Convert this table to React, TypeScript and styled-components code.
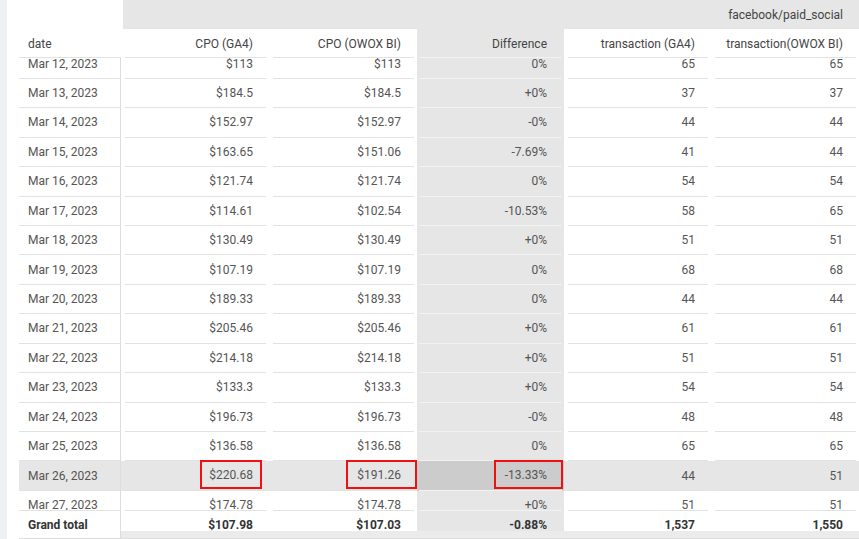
import React from "react";
import styled, { createGlobalStyle } from "styled-components";

const GlobalStyle = createGlobalStyle`
  html, body {
    margin: 0;
    padding: 0;
    background: #ffffff;
  }
  body {
    font-family: Roboto, "Liberation Sans", Arial, sans-serif;
    font-size: 12px;
    color: #555555;
  }
`;

const COLUMNS = "102px 148px 148px 147px 147px 148px";

export const Page = styled.div`
  display: flex;
  width: 859px;
  height: 539px;
  overflow: hidden;
`;

export const SideStrip = styled.div`
  width: 7px;
  flex-shrink: 0;
  background: #eef1f4;
`;

export const Report = styled.div`
  flex: 1;
  display: flex;
  flex-direction: column;
  padding-left: 12px;
`;

export const GroupBand = styled.div`
  height: 29px;
  margin-left: 104px;
  background: #e6e6e6;
  display: flex;
  align-items: center;
  justify-content: flex-end;
  padding-right: 16px;
  color: #444444;
  font-size: 12px;
`;

export const Row = styled.div<{ $height: number; $active?: boolean }>`
  display: grid;
  grid-template-columns: ${COLUMNS};
  height: ${(p) => p.$height}px;
  flex-shrink: 0;
  background: ${(p) => (p.$active ? "#e6e6e6" : "transparent")};
`;

export const Body = styled.div`
  height: 452px;
  overflow: hidden;
  flex-shrink: 0;
`;

export const Scroller = styled.div`
  margin-top: -8.7px;
  display: flex;
  flex-direction: column;
`;

export const Cell = styled.div<{
  $diff?: boolean;
  $active?: boolean;
  $divider?: boolean;
}>`
  display: flex;
  min-width: 0;
  background: ${(p) =>
    p.$diff ? (p.$active ? "#cccccc" : "#e6e6e6") : "transparent"};
  border-right: ${(p) => (p.$divider ? "1px solid #dddddd" : "none")};
`;

export const CellInner = styled.div<{
  $first?: boolean;
  $diff?: boolean;
  $line?: boolean;
  $top?: boolean;
  $bold?: boolean;
}>`
  flex: 1;
  display: flex;
  align-items: center;
  justify-content: ${(p) => (p.$first ? "flex-start" : "flex-end")};
  margin: ${(p) => (p.$first ? "0" : p.$diff ? "0 2px" : "0 3px 0 4px")};
  padding: ${(p) =>
    p.$first ? "0 0 0 9px" : p.$diff ? "0 15px 0 0" : "0 13px 0 0"};
  border-bottom: ${(p) =>
    p.$line ? `1px solid ${p.$diff ? "#f2f2f2" : "#e2e2e2"}` : "none"};
  border-top: ${(p) =>
    p.$top ? `1px solid ${p.$diff ? "#f2f2f2" : "#e2e2e2"}` : "none"};
  white-space: nowrap;
  font-weight: ${(p) => (p.$bold ? 700 : 400)};
  color: ${(p) => (p.$bold ? "#333333" : "inherit")};
`;

export const HeadLabel = styled.span`
  color: #444444;
  padding-top: 1px;
`;

export const Flag = styled.span<{ $pl: number; $pr: number }>`
  align-self: stretch;
  display: inline-flex;
  align-items: center;
  border: 2px solid #f01010;
  padding: 0 ${(p) => p.$pr}px 0 ${(p) => p.$pl}px;
  margin-right: -${(p) => p.$pr + 2}px;
  margin-top: -1px;
  margin-bottom: 1px;
`;

export const Footer = styled.div`
  position: relative;
  border-bottom: 1px solid #dddddd;
`;

export const ScrollTrack = styled.div`
  position: absolute;
  left: 102px;
  right: 0;
  bottom: 0;
  height: 7px;
  background: #ebebeb;
`;

interface IRow {
  date: string;
  ga4: string;
  owox: string;
  diff: string;
  tGa4: string;
  tOwox: string;
  active?: boolean;
}

const rows: IRow[] = [
  { date: "Mar 12, 2023", ga4: "$113", owox: "$113", diff: "0%", tGa4: "65", tOwox: "65" },
  { date: "Mar 13, 2023", ga4: "$184.5", owox: "$184.5", diff: "+0%", tGa4: "37", tOwox: "37" },
  { date: "Mar 14, 2023", ga4: "$152.97", owox: "$152.97", diff: "-0%", tGa4: "44", tOwox: "44" },
  { date: "Mar 15, 2023", ga4: "$163.65", owox: "$151.06", diff: "-7.69%", tGa4: "41", tOwox: "44" },
  { date: "Mar 16, 2023", ga4: "$121.74", owox: "$121.74", diff: "0%", tGa4: "54", tOwox: "54" },
  { date: "Mar 17, 2023", ga4: "$114.61", owox: "$102.54", diff: "-10.53%", tGa4: "58", tOwox: "65" },
  { date: "Mar 18, 2023", ga4: "$130.49", owox: "$130.49", diff: "+0%", tGa4: "51", tOwox: "51" },
  { date: "Mar 19, 2023", ga4: "$107.19", owox: "$107.19", diff: "0%", tGa4: "68", tOwox: "68" },
  { date: "Mar 20, 2023", ga4: "$189.33", owox: "$189.33", diff: "0%", tGa4: "44", tOwox: "44" },
  { date: "Mar 21, 2023", ga4: "$205.46", owox: "$205.46", diff: "+0%", tGa4: "61", tOwox: "61" },
  { date: "Mar 22, 2023", ga4: "$214.18", owox: "$214.18", diff: "+0%", tGa4: "51", tOwox: "51" },
  { date: "Mar 23, 2023", ga4: "$133.3", owox: "$133.3", diff: "+0%", tGa4: "54", tOwox: "54" },
  { date: "Mar 24, 2023", ga4: "$196.73", owox: "$196.73", diff: "-0%", tGa4: "48", tOwox: "48" },
  { date: "Mar 25, 2023", ga4: "$136.58", owox: "$136.58", diff: "0%", tGa4: "65", tOwox: "65" },
  { date: "Mar 26, 2023", ga4: "$220.68", owox: "$191.26", diff: "-13.33%", tGa4: "44", tOwox: "51", active: true },
  { date: "Mar 27, 2023", ga4: "$174.78", owox: "$174.78", diff: "+0%", tGa4: "51", tOwox: "51" },
];

const headers = [
  "date",
  "CPO (GA4)",
  "CPO (OWOX BI)",
  "Difference",
  "transaction (GA4)",
  "transaction(OWOX BI)",
];

function DataRow({ row }: { row: IRow }) {
  const a = !!row.active;
  return (
    <Row $height={29.45} $active={a}>
      <Cell $divider>
        <CellInner $first $line>
          {row.date}
        </CellInner>
      </Cell>
      <Cell>
        <CellInner $line>
          {a ? <Flag $pl={7} $pr={7}>{row.ga4}</Flag> : row.ga4}
        </CellInner>
      </Cell>
      <Cell>
        <CellInner $line>
          {a ? <Flag $pl={9} $pr={14}>{row.owox}</Flag> : row.owox}
        </CellInner>
      </Cell>
      <Cell $diff $active={a}>
        <CellInner $diff $line>
          {a ? <Flag $pl={9} $pr={14}>{row.diff}</Flag> : row.diff}
        </CellInner>
      </Cell>
      <Cell>
        <CellInner $line>{row.tGa4}</CellInner>
      </Cell>
      <Cell>
        <CellInner $line>{row.tOwox}</CellInner>
      </Cell>
    </Row>
  );
}

export default function App() {
  const totals = ["$107.98", "$107.03", "-0.88%", "1,537", "1,550"];

  return (
    <>
      <GlobalStyle />
      <Page>
        <SideStrip />
        <Report>
          <GroupBand>facebook/paid_social</GroupBand>

          <Row $height={29}>
            {headers.map((h, i) => (
              <Cell key={h} $diff={i === 3}>
                <CellInner $first={i === 0} $diff={i === 3} $line>
                  <HeadLabel>{h}</HeadLabel>
                </CellInner>
              </Cell>
            ))}
          </Row>

          <Body>
            <Scroller>
              {rows.map((r) => (
                <DataRow key={r.date} row={r} />
              ))}
            </Scroller>
          </Body>

          <Footer>
            <Row $height={28}>
              <Cell $divider>
                <CellInner $first $top $bold>
                  Grand total
                </CellInner>
              </Cell>
              {totals.map((t, i) => (
                <Cell key={t} $diff={i === 2}>
                  <CellInner $diff={i === 2} $top $bold>
                    {t}
                  </CellInner>
                </Cell>
              ))}
            </Row>
            <ScrollTrack />
          </Footer>
        </Report>
      </Page>
    </>
  );
}
